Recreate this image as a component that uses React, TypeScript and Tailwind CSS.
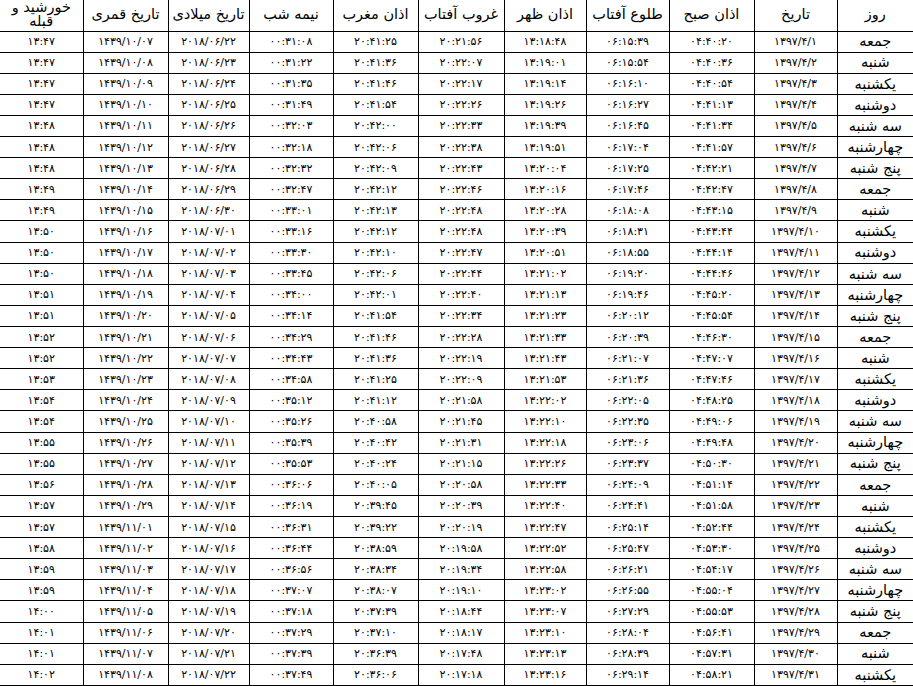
const FA_DIGITS = "۰۱۲۳۴۵۶۷۸۹";
const fa = (s: string) => s.replace(/\d/g, (d) => FA_DIGITS[Number(d)]);

type Column = { title: React.ReactNode; width: string };

const columns: Column[] = [
  { title: "روز", width: "w-[76px]" },
  { title: "تاریخ", width: "w-[83px]" },
  { title: "اذان صبح", width: "w-[85px]" },
  { title: "طلوع آفتاب", width: "w-[83px]" },
  { title: "اذان ظهر", width: "w-[82px]" },
  { title: "غروب آفتاب", width: "w-[86px]" },
  { title: "اذان مغرب", width: "w-[85px]" },
  { title: "نیمه شب", width: "w-[84px]" },
  { title: "تاریخ میلادی", width: "w-[81px]" },
  { title: "تاریخ قمری", width: "w-[85px]" },
  {
    title: (
      <>
        خورشید و
        <br />
        قبله
      </>
    ),
    width: "w-[83px]",
  },
];

// روز | تاریخ | صبح | طلوع | ظهر | غروب | مغرب | نیمه شب | میلادی | قمری | قبله
const rows = `
جمعه|1397/4/1|04:40:20|06:15:39|13:18:48|20:21:56|20:41:25|00:31:08|2018/06/22|1439/10/07|13:47
شنبه|1397/4/2|04:40:36|06:15:54|13:19:01|20:22:07|20:41:36|00:31:22|2018/06/23|1439/10/08|13:47
یکشنبه|1397/4/3|04:40:54|06:16:10|13:19:14|20:22:17|20:41:46|00:31:35|2018/06/24|1439/10/09|13:47
دوشنبه|1397/4/4|04:41:13|06:16:27|13:19:26|20:22:26|20:41:54|00:31:49|2018/06/25|1439/10/10|13:47
سه شنبه|1397/4/5|04:41:34|06:16:45|13:19:39|20:22:33|20:42:00|00:32:03|2018/06/26|1439/10/11|13:48
چهارشنبه|1397/4/6|04:41:57|06:17:04|13:19:51|20:22:38|20:42:06|00:32:18|2018/06/27|1439/10/12|13:48
پنج شنبه|1397/4/7|04:42:21|06:17:25|13:20:04|20:22:43|20:42:09|00:32:32|2018/06/28|1439/10/13|13:48
جمعه|1397/4/8|04:42:47|06:17:46|13:20:16|20:22:46|20:42:12|00:32:47|2018/06/29|1439/10/14|13:49
شنبه|1397/4/9|04:43:15|06:18:08|13:20:28|20:22:48|20:42:13|00:33:01|2018/06/30|1439/10/15|13:49
یکشنبه|1397/4/10|04:43:44|06:18:31|13:20:39|20:22:48|20:42:12|00:33:16|2018/07/01|1439/10/16|13:50
دوشنبه|1397/4/11|04:44:14|06:18:55|13:20:51|20:22:47|20:42:10|00:33:30|2018/07/02|1439/10/17|13:50
سه شنبه|1397/4/12|04:44:46|06:19:20|13:21:02|20:22:44|20:42:06|00:33:45|2018/07/03|1439/10/18|13:50
چهارشنبه|1397/4/13|04:45:20|06:19:46|13:21:13|20:22:40|20:42:01|00:34:00|2018/07/04|1439/10/19|13:51
پنج شنبه|1397/4/14|04:45:54|06:20:12|13:21:23|20:22:34|20:41:54|00:34:14|2018/07/05|1439/10/20|13:51
جمعه|1397/4/15|04:46:30|06:20:39|13:21:33|20:22:28|20:41:46|00:34:29|2018/07/06|1439/10/21|13:52
شنبه|1397/4/16|04:47:07|06:21:07|13:21:43|20:22:19|20:41:36|00:34:43|2018/07/07|1439/10/22|13:52
یکشنبه|1397/4/17|04:47:46|06:21:36|13:21:53|20:22:09|20:41:25|00:34:58|2018/07/08|1439/10/23|13:53
دوشنبه|1397/4/18|04:48:25|06:22:05|13:22:02|20:21:58|20:41:12|00:35:12|2018/07/09|1439/10/24|13:54
سه شنبه|1397/4/19|04:49:06|06:22:35|13:22:10|20:21:45|20:40:58|00:35:26|2018/07/10|1439/10/25|13:54
چهارشنبه|1397/4/20|04:49:48|06:23:06|13:22:18|20:21:31|20:40:42|00:35:39|2018/07/11|1439/10/26|13:55
پنج شنبه|1397/4/21|04:50:30|06:23:37|13:22:26|20:21:15|20:40:24|00:35:53|2018/07/12|1439/10/27|13:55
جمعه|1397/4/22|04:51:14|06:24:09|13:22:33|20:20:58|20:40:05|00:36:06|2018/07/13|1439/10/28|13:56
شنبه|1397/4/23|04:51:58|06:24:41|13:22:40|20:20:39|20:39:45|00:36:19|2018/07/14|1439/10/29|13:57
یکشنبه|1397/4/24|04:52:44|06:25:14|13:22:47|20:20:19|20:39:22|00:36:31|2018/07/15|1439/11/01|13:57
دوشنبه|1397/4/25|04:53:30|06:25:47|13:22:52|20:19:58|20:38:59|00:36:44|2018/07/16|1439/11/02|13:58
سه شنبه|1397/4/26|04:54:17|06:26:21|13:22:58|20:19:34|20:38:34|00:36:56|2018/07/17|1439/11/03|13:59
چهارشنبه|1397/4/27|04:55:04|06:26:55|13:23:02|20:19:10|20:38:07|00:37:07|2018/07/18|1439/11/04|13:59
پنج شنبه|1397/4/28|04:55:53|06:27:29|13:23:07|20:18:44|20:37:39|00:37:18|2018/07/19|1439/11/05|14:00
جمعه|1397/4/29|04:56:41|06:28:04|13:23:10|20:18:17|20:37:10|00:37:29|2018/07/20|1439/11/06|14:01
شنبه|1397/4/30|04:57:31|06:28:39|13:23:13|20:17:48|20:36:39|00:37:39|2018/07/21|1439/11/07|14:01
یکشنبه|1397/4/31|04:58:21|06:29:14|13:23:16|20:17:18|20:36:06|00:37:49|2018/07/22|1439/11/08|14:02
`
  .trim()
  .split("\n")
  .map((line) => line.split("|"));

export default function App() {
  return (
    <div dir="rtl" className="w-[913px] bg-white font-['DejaVu_Sans',sans-serif] text-black">
      <table className="w-full table-fixed border-collapse">
        <thead>
          <tr className="h-[31px]">
            {columns.map((col, i) => (
              <th
                key={i}
                className={`${col.width} border-b border-black px-0 pb-[2px] text-center align-middle text-[14.5px] font-normal leading-[14px] ${
                  i < columns.length - 1 ? "border-l" : ""
                }`}
              >
                {col.title}
              </th>
            ))}
          </tr>
        </thead>
        <tbody>
          {rows.map((cells, r) => (
            <tr key={r} className="h-[21.12px]">
              {cells.map((cell, i) => (
                <td
                  key={i}
                  className={`border-b border-black p-0 text-center align-middle leading-none ${
                    i === 0 ? "text-[14.5px]" : "text-[11px]"
                  } ${i < cells.length - 1 ? "border-l" : ""}`}
                >
                  {i === 0 ? cell : fa(cell)}
                </td>
              ))}
            </tr>
          ))}
        </tbody>
      </table>
    </div>
  );
}
